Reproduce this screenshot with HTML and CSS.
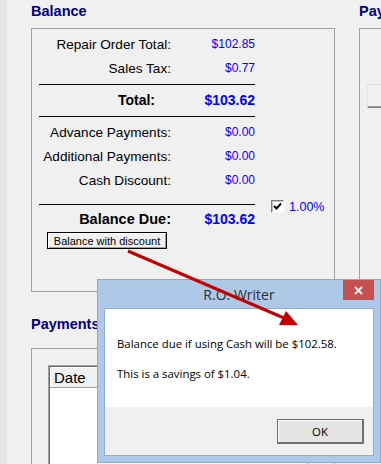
FILE: index.html
```html
<!DOCTYPE html>
<html lang="en">

<head>
    <meta charset="UTF-8">
    <meta name="viewport" content="width=device-width, initial-scale=1.0">
    <title>R.O. Writer - Balance</title>

    <link rel="stylesheet" href="styles.css">
</head>

<body>
    <div class="app">
        <div class="strip"></div>

        <div class="main">
            <div class="top-row">
                <section class="group balance">
                    <h2 class="group-title">Balance</h2>
                    <div class="group-box balance-box">
                        <div class="line-item">
                            <span class="label">Repair Order Total:</span>
                            <span class="amount">$102.85</span>
                        </div>
                        <div class="line-item">
                            <span class="label">Sales Tax:</span>
                            <span class="amount">$0.77</span>
                        </div>
                        <div class="rule"></div>
                        <div class="line-item total">
                            <span class="label">Total:</span>
                            <span class="amount">$103.62</span>
                        </div>
                        <div class="rule"></div>
                        <div class="line-item">
                            <span class="label">Advance Payments:</span>
                            <span class="amount">$0.00</span>
                        </div>
                        <div class="line-item">
                            <span class="label">Additional Payments:</span>
                            <span class="amount">$0.00</span>
                        </div>
                        <div class="line-item">
                            <span class="label">Cash Discount:</span>
                            <span class="amount">$0.00</span>
                        </div>
                        <div class="rule-row">
                            <div class="rule"></div>
                            <label class="discount">
                                <span class="check">
                                    <svg width="9" height="9" viewBox="0 0 9 9">
                                        <path d="M1 4 L3.5 6.5 L8 1.5" fill="none" stroke="#000" stroke-width="2"/>
                                    </svg>
                                </span>
                                1.00%
                            </label>
                        </div>
                        <div class="line-item due">
                            <span class="label">Balance Due:</span>
                            <span class="amount">$103.62</span>
                        </div>
                        <button class="win-btn">Balance with discount</button>
                    </div>
                </section>

                <section class="group options">
                    <h2 class="group-title">Pay</h2>
                    <div class="group-box options-box">
                        <button class="wide-btn"></button>
                    </div>
                </section>
            </div>

            <section class="group payments">
                <h2 class="group-title">Payments</h2>
                <div class="group-box payments-box">
                    <div class="listview">
                        <div class="list-head">
                            <span class="col">Date</span>
                        </div>
                    </div>
                </div>
            </section>
        </div>
    </div>

    <div class="dialog">
        <div class="titlebar">
            <span></span>
            <span class="title">R.O. Writer</span>
            <span class="close">
                <svg width="9" height="9" viewBox="0 0 9 9">
                    <path d="M1 1 L8 8 M8 1 L1 8" stroke="#fff" stroke-width="1.8"/>
                </svg>
            </span>
        </div>
        <div class="client">
            <div class="message">
                <p>Balance due if using Cash will be $102.58.</p>
                <p>This is a savings of $1.04.</p>
            </div>
            <div class="button-bar">
                <button class="ok-btn">OK</button>
            </div>
        </div>
    </div>

    <svg class="arrow" width="381" height="464" viewBox="0 0 381 464">
        <line x1="128" y1="251" x2="284" y2="318" stroke="#c40000" stroke-width="3"/>
        <polygon points="298,325 279,325 286,311" fill="#c40000"/>
    </svg>
</body>

</html>
```

FILE: styles.css
```css
* {
    box-sizing: border-box;
}

body {
    margin: 0;
    height: 464px;
    overflow: hidden;
    background-color: #f0f0f0;
    font-family: "Liberation Sans", Arial, sans-serif;
    color: #000;
}

.app {
    display: flex;
    height: 464px;
}

.strip {
    flex: 0 0 7px;
    background-color: #e6e6e6;
}

.main {
    flex: 1;
    min-width: 0;
    padding-left: 24px;
}

.top-row {
    display: flex;
    gap: 24px;
}

.group-title {
    margin: 3px 0 8px;
    font-size: 14.5px;
    line-height: 17px;
    font-weight: bold;
    color: #000080;
    white-space: nowrap;
}

.group-box {
    border: 1px solid #a0a0a0;
}

/* balance */

.balance {
    flex: 0 0 304px;
}

.balance-box {
    height: 264px;
    padding: 3px 0 0 7px;
}

.line-item {
    display: flex;
    align-items: center;
    height: 24px;
}

.label {
    width: 132px;
    text-align: right;
    font-size: 13.6px;
}

.amount {
    width: 84px;
    text-align: right;
    font-size: 12px;
    color: #0000ff;
}

.total .label {
    padding-right: 16px;
    font-size: 14px;
    font-weight: bold;
}

.total .amount,
.due .amount {
    font-size: 14px;
    font-weight: bold;
}

.due .label {
    font-size: 14.5px;
    font-weight: bold;
}

.rule {
    width: 216px;
    border-top: 1px solid #000;
    margin: 4px 0 3px;
}

.rule-row {
    display: flex;
    align-items: center;
    height: 6px;
    margin-top: 9px;
}

.rule-row .rule {
    margin: 0;
}

.discount {
    display: flex;
    align-items: center;
    gap: 5px;
    margin: 5px 0 0 16px;
    font-size: 12.5px;
    color: #0000ff;
}

.check {
    display: flex;
    align-items: center;
    justify-content: center;
    width: 13px;
    height: 13px;
    background-color: #fff;
    border: 1px solid;
    border-color: #808080 #f8f8f8 #f8f8f8 #808080;
    box-shadow: inset 1px 1px #c0c0c0;
}

.win-btn {
    display: block;
    width: 120px;
    height: 17px;
    margin: 1px 0 0 8px;
    padding: 0;
    font-family: "Liberation Sans", Arial, sans-serif;
    font-size: 11px;
    color: #000;
    background-color: #f0f0f0;
    border: 1px solid #000;
    box-shadow: inset 1px 1px #fff, inset -1px -1px #a0a0a0;
    cursor: pointer;
}

/* payment options (cut off at the right) */

.options {
    flex: 0 0 120px;
}

.options-box {
    height: 264px;
    padding: 55px 0 0 7px;
}

.wide-btn {
    display: block;
    width: 110px;
    height: 24px;
    padding: 0;
    background-color: #f0f0f0;
    border: 1px solid;
    border-color: #e3e3e3 #808080 #808080 #e3e3e3;
    box-shadow: inset -1px -1px #a0a0a0;
}

/* payments */

.payments {
    width: 304px;
}

.payments .group-title {
    margin: 24px 0 15px;
}

.payments-box {
    height: 140px;
    padding: 16px 0 0 16px;
}

.listview {
    width: 260px;
    height: 130px;
    background-color: #fff;
    border: 1px solid #a0a0a0;
    box-shadow: inset 1px 1px #696969;
}

.list-head {
    display: flex;
    padding: 1px 0 0 1px;
}

.col {
    width: 80px;
    height: 21px;
    padding-left: 4px;
    font-size: 15px;
    line-height: 21px;
    background-color: #f0f0f0;
    border-right: 1px solid #a0a0a0;
    border-bottom: 1px solid #a0a0a0;
    box-shadow: inset 1px 1px #fff;
}

/* message box */

.dialog {
    position: absolute;
    left: 97px;
    top: 279px;
    width: 284px;
    padding: 0 6px 6px;
    background-color: #adc9e7;
    border: 1px solid #8ea8c8;
    font-family: "Open Sans", "Liberation Sans", sans-serif;
}

.titlebar {
    display: grid;
    grid-template-columns: 31px 1fr 31px;
    height: 28px;
}

.title {
    align-self: center;
    text-align: center;
    font-size: 14px;
    color: #2e2e2e;
}

.close {
    display: flex;
    align-items: center;
    justify-content: center;
    height: 20px;
    background-color: #c75050;
}

.client {
    border: 1px solid #93aecd;
}

.message {
    height: 98px;
    padding: 27px 12px 0;
    background-color: #fff;
    font-size: 11.4px;
    line-height: 15px;
    color: #000;
}

.message p {
    margin: 0 0 15px;
}

.button-bar {
    display: flex;
    justify-content: flex-end;
    height: 48px;
    padding: 12px 9px 0 0;
    background-color: #f0f0f0;
}

.ok-btn {
    width: 87px;
    height: 25px;
    padding: 0;
    font-family: "Open Sans", "Liberation Sans", sans-serif;
    font-size: 11.4px;
    color: #000;
    background-color: #e5e5e5;
    border: 1px solid #707070;
    border-right-width: 2px;
    border-bottom-width: 2px;
    box-shadow: inset 1px 1px #fcfcfc;
}

.arrow {
    position: absolute;
    left: 0;
    top: 0;
    pointer-events: none;
}
```
